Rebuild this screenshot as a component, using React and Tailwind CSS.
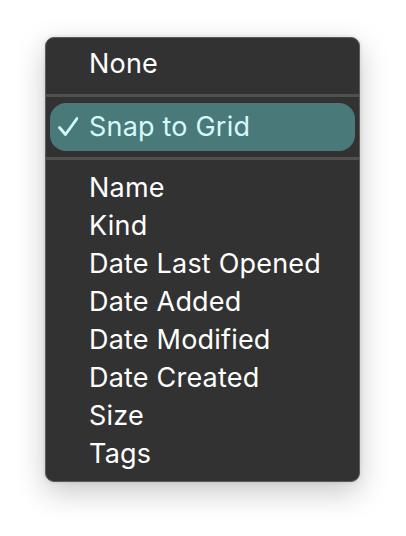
const items = [
  'Name',
  'Kind',
  'Date Last Opened',
  'Date Added',
  'Date Modified',
  'Date Created',
  'Size',
  'Tags',
];

export default function App() {
  return (
    <div
      className="min-h-screen w-full bg-white pl-[45px] pt-[37px]"
      style={{ fontFamily: 'Inter, "Noto Sans", sans-serif' }}
    >
      <div className="w-[315px] rounded-[9px] border border-[#5c5c5c] bg-[#323232] pt-[7px] pb-[8px] text-[27px] tracking-[0.2px] text-white shadow-[0_10px_30px_rgba(0,0,0,0.22),0_0_4px_rgba(0,0,0,0.12)]">
        {/* Ordenar */}
        <div className="flex h-[38px] items-center pl-[43px]">None</div>

        <div className="mt-[11px] h-[3px] bg-[#505050]" />

        {/* Opción marcada */}
        <div className="mx-[4px] mt-[6px] flex h-[48px] items-center rounded-[16px] bg-[#4a7979] text-[#d6fafa]">
          <svg className="ml-[8px] mr-[11px] h-[20px] w-[20px]" viewBox="0 0 20 20" fill="none">
            <path
              d="M1.5 10.5 L7.5 17.5 L19 1.5"
              stroke="#d6fafa"
              strokeWidth="2.8"
              strokeLinecap="round"
              strokeLinejoin="round"
            />
          </svg>
          Snap to Grid
        </div>

        <div className="mt-[6px] h-[3px] bg-[#505050]" />

        <div className="mt-[9px] flex flex-col">
          {items.map((name) => (
            <div key={name} className="flex h-[38px] items-center pl-[43px]">
              {name}
            </div>
          ))}
        </div>
      </div>
    </div>
  );
}
